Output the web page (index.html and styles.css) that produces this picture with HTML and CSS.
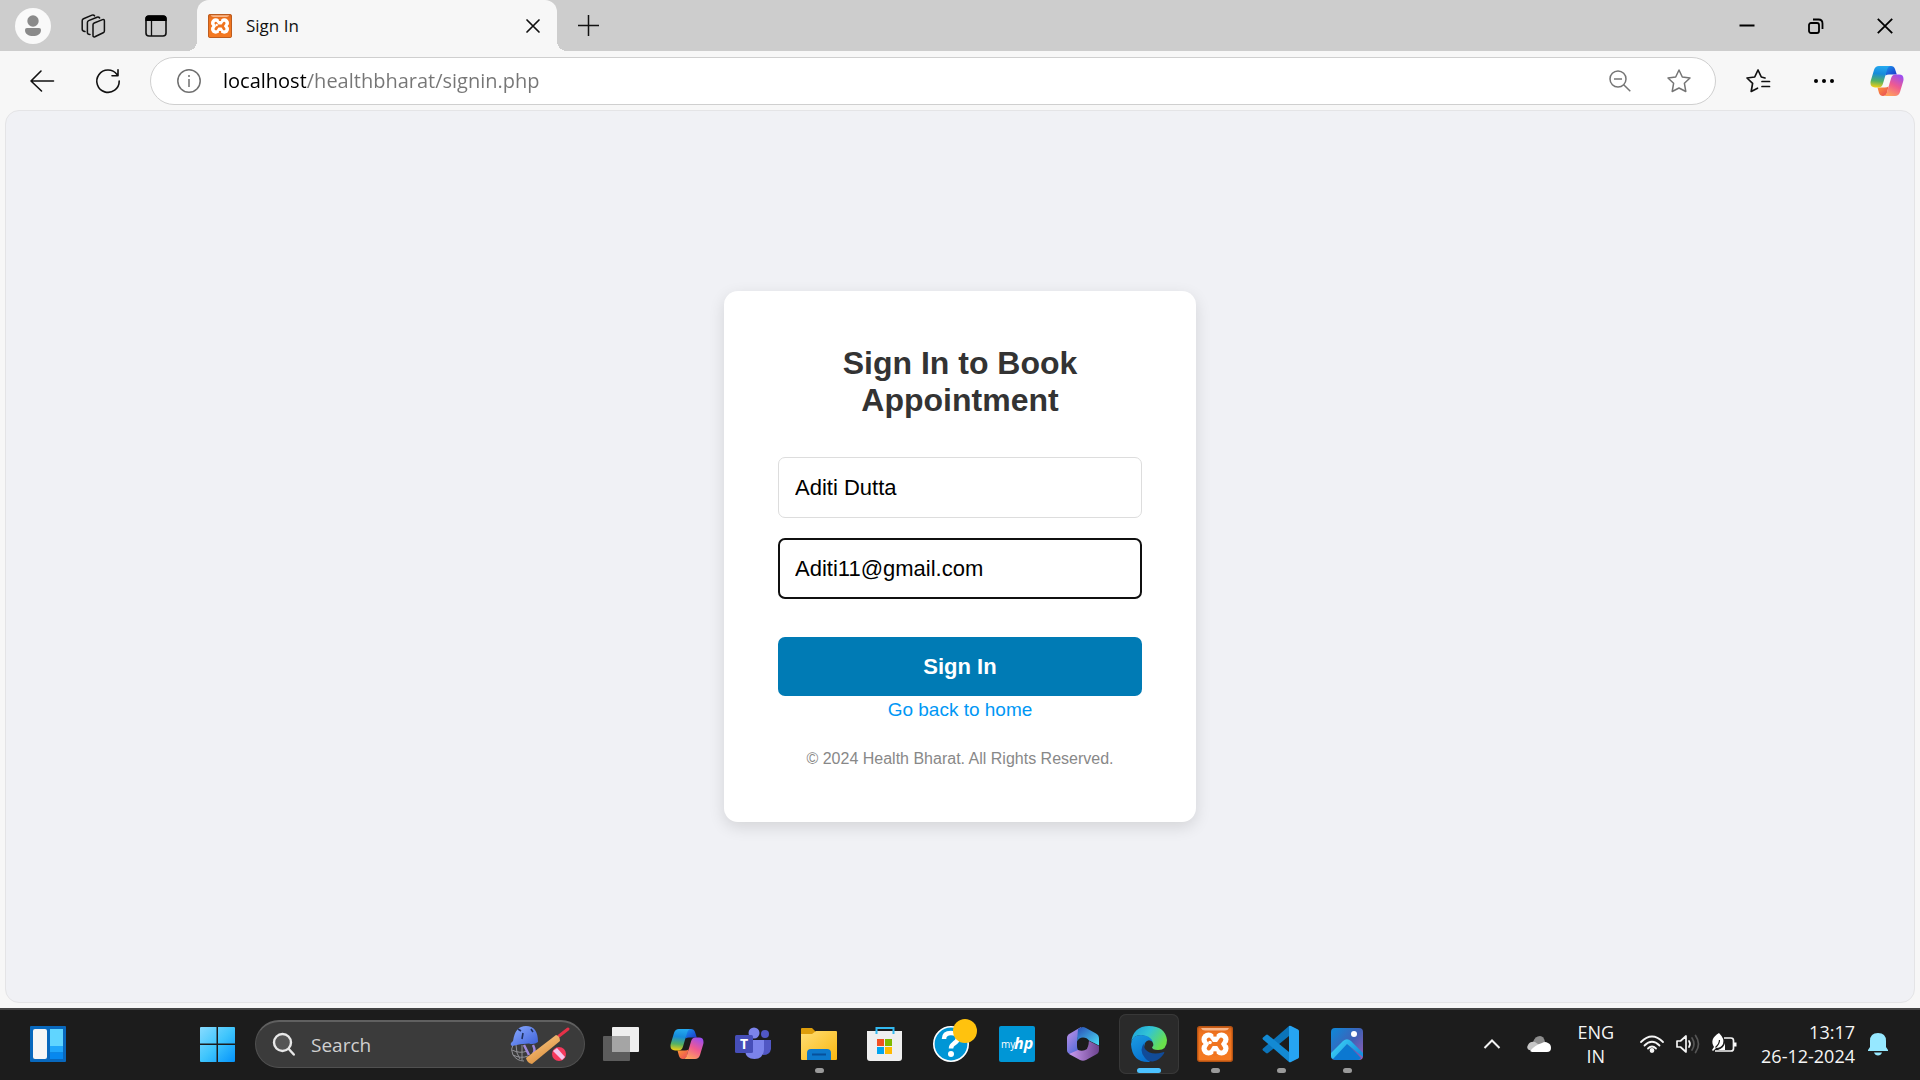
FILE: index.html
```html
<!DOCTYPE html>
<html lang="en">
<head>
<meta charset="utf-8">
<title>Sign In</title>
<link rel="stylesheet" href="styles.css">
</head>
<body>
<header class="browser">
  <div class="tabstrip">
    <div class="strip-tools">
      <button class="icon-button" aria-label="Profile"><svg width="36" height="36" viewBox="0 0 36 36"><circle cx="18" cy="18" r="18" fill="#f9f9f9"/><circle cx="18" cy="13" r="5.7" fill="#8a8a8a"/><path d="M12 20h12a2 2 0 0 1 2 2c0 4-3.500 6-8 6s-8-2-8-6a2 2 0 0 1 2-2z" fill="#8a8a8a"/></svg></button>
      <button class="icon-button workspaces" aria-label="Workspaces"><svg width="24" height="24" viewBox="0 0 24 24" fill="none" stroke="#111" stroke-width="1.500" stroke-linejoin="round" stroke-linecap="round"><path d="M12 10.800q0-1.300 1.200-1.800l8.300-3.400q1.900-.7 1.900 1.300v10q0 1.300-1.200 1.800l-8.300 4q-1.900.7-1.900-1.300z"/><path d="M9 20.500q-2.600 0-2.600-2V8.600q0-1.400 1.300-2L16 3.200q1.800-.5 2.600.8"/><path d="M4 17.600q-2.800-.3-2.800-2.300V6.700q0-1.400 1.300-2L11 1.100q1.800-.5 2.600.8"/></svg></button>
      <button class="icon-button" aria-label="Tab actions"><svg width="22" height="22" viewBox="0 0 22 22"><rect x="1" y="1" width="20" height="20" rx="3" fill="none" stroke="#111" stroke-width="1.600"/><path d="M.4 6V3.500q0-3.100 3.100-3.100h15q3.100 0 3.100 3.100V6z"/><path d="M6.500 6v15" stroke="#111" stroke-width="1.300"/></svg></button>
    </div>
    <div class="tab">
      <svg width="24" height="24" viewBox="0 0 36 36"><defs>
        <linearGradient id="xampp-bg" x2="0" y2="1"><stop offset="0" stop-color="#d9651c"/><stop offset=".2" stop-color="#f0741f"/><stop offset="1" stop-color="#f57a22"/></linearGradient>
        <symbol id="xampp" viewBox="0 0 36 36"><rect x=".7" y=".7" width="34.600" height="34.600" rx="2" fill="url(#xampp-bg)" stroke="#b65313" stroke-width="1.400"/><path d="M4 2h28q-1 2.500-4 2.500H8Q5 4.500 4 2z" fill="#f9b78a"/><g fill="#fff"><circle cx="11.500" cy="13.500" r="7"/><circle cx="11.500" cy="22.500" r="7"/><circle cx="24.500" cy="13.500" r="7"/><circle cx="24.500" cy="22.500" r="7"/><path d="M12 12h12v12H12z"/></g><g stroke="#f0741f" stroke-linecap="round" stroke-width="4.200"><path d="M11.800 13.800 14 17v2l-2.200 3.400M24.200 13.800 22 17v2l2.200 3.400M14 18h8" fill="none"/></g><path d="M3.800 16.300 6.800 18l-3 1.700zM32.200 16.300 29.200 18l3 1.700zM16.700 6h2.600l.4 4.500h-3.400zM16.700 30h2.600l.4-4.500h-3.400z" fill="#f0741f"/><circle cx="13" cy="16.500" r="1.800" fill="#fff"/></symbol>
      </defs><use href="#xampp"/></svg>
      <span class="tab-title">Sign In</span>
      <button class="icon-button" aria-label="Close tab"><svg width="14" height="14" viewBox="0 0 14 14" stroke="#111" stroke-width="1.700" stroke-linecap="round"><path d="m1 1 12 12M13 1 1 13"/></svg></button>
    </div>
    <button class="icon-button new-tab" aria-label="New tab"><svg width="21" height="21" viewBox="0 0 21 21" stroke="#111" stroke-width="1.500"><path d="M10.500 0v21M0 10.500h21"/></svg></button>
    <div class="window-controls">
      <button class="icon-button" aria-label="Minimise"><svg width="16" height="16" viewBox="0 0 16 16"><path d="M.5 7.500h15" stroke="#000" stroke-width="2"/></svg></button>
      <button class="icon-button" aria-label="Restore"><svg width="16" height="16" viewBox="0 0 16 16" fill="none" stroke="#000" stroke-width="1.800"><rect x="1" y="5" width="10" height="10" rx="2"/><path d="M5 1.500h5.500q4 0 4 4V11"/></svg></button>
      <button class="icon-button" aria-label="Close window"><svg width="16" height="16" viewBox="0 0 16 16" stroke="#000" stroke-width="1.800"><path d="m.8.8 14.400 14.400M15.200.8.800 15.200"/></svg></button>
    </div>
  </div>
  <div class="toolbar">
    <button class="icon-button" aria-label="Back"><svg width="24" height="24" viewBox="0 0 24 24" fill="none" stroke="#111" stroke-width="1.600" stroke-linecap="round" stroke-linejoin="round"><path d="M23.500 12H1M11 2 1 12l10.500 10"/></svg></button>
    <button class="icon-button reload" aria-label="Reload"><svg width="24" height="24" viewBox="0 0 24 24" fill="none" stroke="#111" stroke-width="1.600" stroke-linecap="round" stroke-linejoin="round"><path d="M23.200 12A11.200 11.200 0 1 1 21 5.500M22 .8v6h-6"/></svg></button>
    <div class="address">
      <svg width="24" height="24" viewBox="0 0 24 24" fill="none" stroke="#707070" stroke-width="1.500"><circle cx="12" cy="12" r="11.200"/><path d="M12 10v8M12 6v2"/></svg>
      <input class="url" type="text" aria-label="Address" value="localhost/healthbharat/signin.php">
      <button class="icon-button" aria-label="Zoom"><svg width="22" height="22" viewBox="0 0 22 22" fill="none" stroke="#757575" stroke-width="1.500"><circle cx="9" cy="9" r="8"/><path d="M5 9h8M14.700 14.700l6.600 6.600"/></svg></button>
      <button class="icon-button" aria-label="Add to favourites"><svg width="24" height="24" viewBox="0 0 24 24" fill="none" stroke="#757575" stroke-width="1.500" stroke-linejoin="round"><path d="m12 1 3.300 7 7.700 1-5.600 5.300 1.400 8.200-6.800-3.500-6.800 3.500 1.400-8.200L1 9l7.700-1z"/></svg></button>
    </div>
    <div class="toolbar-end">
      <button class="icon-button" aria-label="Favourites"><svg width="24" height="24" viewBox="0 0 24 24" fill="none" stroke="#111" stroke-width="1.700" stroke-linejoin="round" stroke-linecap="round"><path d="M19 9 15.300 8 12 1 8.700 8 1 9l5.600 5.300-1.400 8.200 6.300-3.300M16 12.500h7.500M16 17.500h7.500"/></svg></button>
      <button class="icon-button" aria-label="Settings and more"><svg width="28" height="20" viewBox="0 0 28 20"><circle cx="6" cy="10" r="2"/><circle cx="14" cy="10" r="2"/><circle cx="22" cy="10" r="2"/></svg></button>
      <button class="icon-button" aria-label="Copilot"><svg width="34" height="32" viewBox="0 0 34 32"><defs>
        <linearGradient id="cp-a" x1=".4" x2=".3" y2="1"><stop offset="0" stop-color="#25a9ef"/><stop offset=".35" stop-color="#168bdb"/><stop offset=".7" stop-color="#55b163"/><stop offset="1" stop-color="#f5cf13"/></linearGradient>
        <linearGradient id="cp-b" x1=".8" x2=".3" y2="1"><stop offset="0" stop-color="#9a4df3"/><stop offset=".5" stop-color="#ef5a91"/><stop offset="1" stop-color="#ffa35c"/></linearGradient>
        <linearGradient id="cp-c" x2="1" y2="1"><stop offset="0" stop-color="#1c9cf0"/><stop offset="1" stop-color="#1a34c9"/></linearGradient>
        <linearGradient id="cp-d" x2="1" y2="1"><stop offset="0" stop-color="#ff9a35"/><stop offset="1" stop-color="#e8455a"/></linearGradient>
        <symbol id="copilot" viewBox="0 0 34 32"><path d="M14 1h7q3 0 4 3l1.800 5.500H19q-2 0-3.500 1z" fill="url(#cp-c)"/><path d="M7.500 22.500H15q2 0 3.500-1L17 28q-1 3-4 3t-4-3z" fill="url(#cp-d)"/><path d="M9 1h12q-3 0-4 4l-4 13.500q-1 4-4.500 4H5Q-.5 22.500.7 16L4 5q1.200-4 5-4z" fill="url(#cp-a)"/><path d="M25 31H13q3 0 4-4l4-13.500q1-4 4.500-4H29q5.500 0 4.300 6.500L30 27q-1.200 4-5 4z" fill="url(#cp-b)"/></symbol>
      </defs><use href="#copilot"/></svg></button>
    </div>
  </div>
</header>

<main class="page">
  <section class="card">
    <h1>Sign In to Book Appointment</h1>
    <form>
      <input class="field" type="text" aria-label="Name" value="Aditi Dutta">
      <input class="field field-active" type="email" aria-label="Email" value="Aditi11@gmail.com">
      <button class="submit" type="button">Sign In</button>
    </form>
    <a class="home-link" href="#">Go back to home</a>
    <p class="copyright">© 2024 Health Bharat. All Rights Reserved.</p>
  </section>
</main>

<footer class="taskbar">
  <button class="icon-button widgets" aria-label="Widgets"><svg width="36" height="36" viewBox="0 0 36 36"><rect y="0" width="36" height="36" rx="1" fill="#0868bd"/><rect x="3" y="3" width="14" height="30" rx="2" fill="#f6f6f6"/><path d="M20 3h13v17H20z" fill="#60d5ff"/><path d="M20 20h13v6.500H20z" fill="#20a7fb"/><path d="M20 26.500h13V33H20z" fill="#0788ee"/></svg></button>
  <button class="icon-button" aria-label="Start"><svg width="35" height="35" viewBox="0 0 35 35"><defs><linearGradient id="win" gradientUnits="userSpaceOnUse" x1="0" y1="0" x2="35" y2="35"><stop offset="0" stop-color="#88dbff"/><stop offset=".5" stop-color="#3fc5fc"/><stop offset="1" stop-color="#0493fb"/></linearGradient></defs><path d="M0 1q0-1 1-1h15.500v16.500H0zM18 0h16q1 0 1 1v15.500H18zM0 18h16.500v17H1q-1 0-1-1zM18 18h17v16q0 1-1 1H18z" fill="url(#win)"/></svg></button>
  <div class="search">
    <svg width="24" height="24" viewBox="0 0 24 24" fill="none" stroke="#e8e8e8" stroke-width="2.400" stroke-linecap="round"><circle cx="9.500" cy="9.500" r="8.500" fill="#555"/><path d="m15.800 16 5 5.500"/></svg>
    <input type="text" aria-label="Search" placeholder="Search">
    <svg width="60" height="40" viewBox="0 0 60 40"><defs><linearGradient id="bat" x2=".6" y2="1"><stop offset="0" stop-color="#ffd08c"/><stop offset="1" stop-color="#d98d3c"/></linearGradient><linearGradient id="helm" x2="1" y2="1"><stop offset="0" stop-color="#8cacff"/><stop offset="1" stop-color="#3c5fd8"/></linearGradient></defs><g fill="none" stroke="#929297" stroke-width="1"><path d="M3 20q-3 4 0 10 4 6 11 6M2 25q8 4 15 1M3 30q8 4 15 1M6 20q0 9 4 14M12 20v15"/></g><path d="M14 20l5 10M23 20q3 6 0 9" stroke="#9e88dc" stroke-width="2.500" fill="none"/><path d="M3 16Q5 1 16 1q12 0 12 16-4 3-9 1.500-9 0-17 2.500-3-2 1-5z" fill="url(#helm)"/><path d="M13 8l-1 6M8 4l3 2M21 4l2 3" stroke="#20315f" stroke-width="1.600"/><path d="m49 11 9-7" stroke="#e53148" stroke-width="3" stroke-linecap="round"/><path d="m46 10q4 1 4 6L22 39q-5-1-6-6z" fill="url(#bat)"/><circle cx="49" cy="29" r="7" fill="#f4385c"/><path d="m43 26 4-3 8 9-3 3z" fill="#f3c5ec"/></svg>
  </div>
  <nav class="apps" aria-label="Apps">
    <button class="app" aria-label="Task view"><svg width="36" height="36" viewBox="0 0 36 36"><rect x="9" y="1" width="27" height="25" rx="1" fill="#efefef"/><rect y="10" width="27" height="25" rx="1" fill="#5c5c5c"/><path d="M9 10h18v16H9z" fill="#a5a5a5"/></svg></button>
    <button class="app" aria-label="Copilot"><svg width="34" height="32" viewBox="0 0 34 32"><use href="#copilot"/></svg></button>
    <button class="app" aria-label="Teams"><svg width="36" height="36" viewBox="0 0 36 36"><circle cx="30" cy="8" r="4" fill="#5157c4"/><path d="M24 14h12v9q-1 6-8 6z" fill="#5157c4"/><circle cx="19" cy="7" r="5.500" fill="#7b83eb"/><path d="M10 14h19v10q-1 9-9.500 9T10 25z" fill="#7b83eb"/><rect y="9" width="18" height="18" rx="1.500" fill="#464eb8"/><text class="teams-letter" x="9" y="23" text-anchor="middle">T</text></svg></button>
    <button class="app running" aria-label="File Explorer"><svg width="36" height="36" viewBox="0 0 36 36"><defs><linearGradient id="folder" x2="1" y2="1"><stop offset="0" stop-color="#ffde74"/><stop offset="1" stop-color="#f9b710"/></linearGradient></defs><path d="M0 3q0-1 1-1h10l4 4v6H0z" fill="#dd9d0b"/><path d="M0 8h11l4-3h20q1 0 1 1v27q0 1-1 1H1q-1 0-1-1z" fill="url(#folder)"/><path d="M6 34v-7q0-4 4-4h16q4 0 4 4v7z" fill="#0d79cc"/><path d="M11 28.500h14" stroke="#07509a" stroke-width="2"/></svg></button>
    <button class="app" aria-label="Microsoft Store"><svg width="36" height="36" viewBox="0 0 36 36"><path d="M9.500 8V2h17v6" fill="none" stroke="#32b9f0" stroke-width="2"/><path d="M0 5h35v27q0 3-3 3H3q-3 0-3-3z" fill="#efefef"/><path d="M10 13h7v7h-7z" fill="#f25022"/><path d="M18 13h7v7h-7z" fill="#7fba00"/><path d="M10 21h7v7h-7z" fill="#00a4ef"/><path d="M18 21h7v7h-7z" fill="#ffb900"/><path d="M9.500 8V5M26.500 8V5" stroke="#32b9f0" stroke-width="2"/></svg></button>
    <button class="app" aria-label="Help and support"><svg width="36" height="36" viewBox="0 0 36 36"><circle cx="18" cy="18" r="17.200" fill="#0096d6" stroke="#fff" stroke-width="1.600"/><path d="M11 13q0-6 7-6t7 5q0 3-4 5.500-3 2-3 5" fill="none" stroke="#fff" stroke-width="4.500"/><circle cx="18" cy="28" r="3" fill="#fff"/></svg><span class="badge"></span></button>
    <button class="app" aria-label="myHP"><svg width="36" height="36" viewBox="0 0 36 36"><rect width="36" height="36" rx="2" fill="#0096d6"/><text class="hp-my" x="2" y="22">my</text><text class="hp-hp" x="15" y="23">hp</text></svg></button>
    <button class="app" aria-label="Microsoft 365"><svg width="32" height="34" viewBox="0 0 32 34"><defs><linearGradient id="m-a" x2=".6" y2="1"><stop offset="0" stop-color="#c793e8"/><stop offset="1" stop-color="#526bd8"/></linearGradient><linearGradient id="m-b" x2="1" y2="1"><stop offset="0" stop-color="#284bb5"/><stop offset="1" stop-color="#4ce0f7"/></linearGradient><linearGradient id="m-c" x2="1"><stop offset="0" stop-color="#ca9bf0"/><stop offset="1" stop-color="#6c438e"/></linearGradient></defs><path d="M14 0 3 6.500Q0 8 0 11v12q0 3 3 4l4 1 6-3q-3-2-3-6v-6z" fill="url(#m-a)"/><path d="M11 2l3-1.500q2-1 5 .5l10 5.500q3 1.700 3 5v7l-10-5q-2-3-6-3t-6 4z" fill="url(#m-b)"/><path d="M2 27l9-4q5 2 9-1l2-8 10 5v4q0 3-3 4.500L19 33q-3 1.500-6 0z" fill="url(#m-c)"/><circle cx="16" cy="17" r="5.500" fill="#1c1c1c"/></svg></button>
    <button class="app running current" aria-label="Edge"><svg width="36" height="36" viewBox="0 0 36 36"><defs><linearGradient id="e-a" x2="1" y2=".5"><stop offset="0" stop-color="#199bdb"/><stop offset=".5" stop-color="#32c4d5"/><stop offset="1" stop-color="#69e04b"/></linearGradient><linearGradient id="e-b" x2=".5" y2="1"><stop offset="0" stop-color="#1b9de2"/><stop offset="1" stop-color="#0872d0"/></linearGradient></defs><path d="M0 17Q2 0 18 0q16 0 18 14 0 10-9 10-6 0-6-3 2-1 1-4-3-7-12-8Q2 9 0 17z" fill="url(#e-a)"/><path d="M0 18Q1 9 10 9q9 0 12 7-5-4-8 1-4 10 5 19Q1 37 0 18z" fill="url(#e-b)"/><path d="M14 16q-7 8 0 16 3 4 8 3.500 7-1.500 11-8 1-2-1-1.200Q20 30 14 23q-2-4 0-7z" fill="#114b98"/></svg></button>
    <button class="app running" aria-label="XAMPP"><svg width="36" height="36" viewBox="0 0 36 36"><use href="#xampp"/></svg></button>
    <button class="app running" aria-label="Visual Studio Code"><svg width="36" height="36" viewBox="0 0 36 36"><path d="M26 0v10L5 27q-1 .8-2 0l-3-2.500q-1-1 0-2z" fill="#0b74ba"/><path d="M26 36V26L5 9q-1-.8-2 0l-3 2.500q-1 1 0 2z" fill="#138ad3"/><path d="M26 0q1-.5 2 0l7 3.500q1 .5 1 1.500v26q0 1-1 1.500L28 36q-1 .5-2 0z" fill="#26a4f2"/></svg></button>
    <button class="app running" aria-label="Photos"><svg width="32" height="32" viewBox="0 0 32 32"><defs><linearGradient id="ph" y1=".2" x2="1" y2="1"><stop offset="0" stop-color="#1483d5"/><stop offset=".5" stop-color="#4160b5"/><stop offset="1" stop-color="#9b5eb5"/></linearGradient><linearGradient id="mt" x2="1" y2=".5"><stop offset="0" stop-color="#43d9f8"/><stop offset="1" stop-color="#1593e0"/></linearGradient></defs><rect width="32" height="32" rx="4" fill="url(#ph)"/><path d="m2 30 14-14 14 14q-1 2-3 2H5q-2 0-3-2z" fill="#0b78d1"/><path d="M0 25 12 13q4-3.500 8 0l12 12v4L16 16 2 31q-2-1-2-3z" fill="url(#mt)"/><circle cx="23" cy="6" r="3" fill="#fff"/></svg></button>
  </nav>
  <div class="tray">
    <button class="icon-button" aria-label="Show hidden icons"><svg width="18" height="12" viewBox="0 0 18 12" fill="none" stroke="#f2f2f2" stroke-width="2"><path d="m1.500 10 7.500-7.500 7.500 7.500"/></svg></button>
    <button class="icon-button cloud" aria-label="OneDrive"><svg width="24" height="18" viewBox="0 0 24 18"><path d="M6 7q2-6 7-6 4 0 5 6l-7 5z" fill="#8d8d8d"/><path d="M2 15q-3-2-1-5 2-4 7-3l9 6-8 3z" fill="#c6c6c6"/><path d="M3 16q5-6 12-8 3-2 6 0 3 1 3 5t-4 4H5z" fill="#fff"/></svg></button>
    <div class="stack language"><span>ENG</span><span>IN</span></div>
    <div class="status">
      <svg width="24" height="18" viewBox="0 0 24 18" fill="none" stroke="#f5f5f5" stroke-width="1.800" stroke-linecap="round"><path d="M1 7q11-11 22 0M4.500 10.500q7.500-7.500 15 0M8 13.500q4-4 8 0"/><circle cx="12" cy="15.500" r="1.500" fill="#fff"/></svg>
      <svg width="24" height="20" viewBox="0 0 24 20" fill="none" stroke="#f5f5f5" stroke-width="1.700" stroke-linecap="round" stroke-linejoin="round"><path d="M1 7h3.500L10 2v16l-5.500-5H1zM13 7q2 3 0 6"/><path d="M16 4q4 6 0 12M19.500 1.500q6 8.500 0 17" stroke="#555"/></svg>
      <svg width="25" height="22" viewBox="0 0 25 22" fill="none" stroke="#f5f5f5" stroke-width="1.700"><path d="M12 5h7q2.500 0 2.500 2.500v8q0 2.500-2.500 2.500H3"/><path d="M22 9.500h2.500v4H22z" fill="#fff" stroke="none"/><path d="M7 0q6 6 4 11-2 4-7 4l-3 3-1-1 2-3Q-3 6 7 0z" fill="#fff" stroke="none"/><path d="M7.500 7q0 4-4 7.500" stroke="#1c1c1c" stroke-width="1.200"/><path d="M6 17q6-2 7-7v7z" fill="#fff" stroke="none"/></svg>
    </div>
    <div class="stack clock"><span>13:17</span><span>26-12-2024</span></div>
    <button class="icon-button" aria-label="Notifications"><svg width="20" height="24" viewBox="0 0 20 24" fill="#96e8ff"><path d="M2 9q0-8 8-8t8 8v6l2 3v1H0v-1l2-3z"/><path d="M6 20.500h8Q13 23.500 10 23.500t-4-3z"/></svg></button>
  </div>
</footer>
</body>
</html>
```

FILE: styles.css
```css
* {
  box-sizing: border-box;
}

body {
  margin: 0;
  min-height: 100vh;
  display: flex;
  flex-direction: column;
  background: #f7f7f7;
  font-family: "Open Sans", "Noto Sans", sans-serif;
}

button,
input {
  margin: 0;
  border: 0;
  padding: 0;
  background: none;
  font-family: inherit;
}

svg {
  display: block;
  flex: none;
  overflow: visible;
}

.icon-button {
  display: flex;
  align-items: center;
  justify-content: center;
  flex: none;
}

/* Tab strip */
.tabstrip {
  display: flex;
  align-items: center;
  height: 51px;
  background: #cdcdcd;
}

.strip-tools {
  display: flex;
  align-items: center;
  gap: 30px;
  width: 197px;
  padding-left: 15px;
}

.workspaces {
  margin-right: 10px;
}

.tab {
  position: relative;
  display: flex;
  align-items: center;
  width: 360px;
  height: 100%;
  padding: 0 17px 0 11px;
  border-radius: 12px 12px 0 0;
  background: #f7f7f7;
}

.tab::before,
.tab::after {
  content: "";
  position: absolute;
  bottom: 0;
  width: 10px;
  height: 10px;
}

.tab::before {
  right: 100%;
  background: radial-gradient(circle at 0 0, transparent 10px, #f7f7f7 10px);
}

.tab::after {
  left: 100%;
  background: radial-gradient(circle at 100% 0, transparent 10px, #f7f7f7 10px);
}

.tab-title {
  flex: 1;
  padding-left: 14px;
  font-size: 17px;
  line-height: 24px;
  color: #111;
}

.new-tab {
  margin-left: 21px;
}

.window-controls {
  display: flex;
  gap: 53px;
  margin-left: auto;
  padding-right: 27px;
}

/* Toolbar */
.toolbar {
  display: flex;
  align-items: center;
  height: 59px;
  padding: 0 16px 0 30px;
}

.reload {
  margin-left: 42px;
}

.address {
  display: flex;
  align-items: center;
  flex: 1;
  height: 48px;
  margin: 0 30px;
  padding: 0 24px 0 26px;
  border: 1px solid #cfcfcf;
  border-radius: 24px;
  background: #fff;
}

.url {
  flex: 1;
  min-width: 0;
  height: 32px;
  margin-left: 22px;
  font-size: 20px;
  color: transparent;
  background: linear-gradient(to right, #000 83px, #767676 83px);
  background-clip: text;
  -webkit-background-clip: text;
}

.address .icon-button + .icon-button {
  margin-left: 36px;
}

.toolbar-end {
  display: flex;
  align-items: center;
  gap: 32px;
}

.toolbar-end .icon-button:first-child {
  margin-right: 8px;
}

/* Page */
.page {
  flex: 1;
  display: flex;
  align-items: center;
  justify-content: center;
  margin: 0 5px 5px;
  padding: 24px;
  border: 1px solid #e4e4e6;
  border-radius: 14px;
  background: #f0f1f5;
  font-family: "Liberation Sans", Arial, sans-serif;
}

.card {
  width: 472px;
  padding: 54px;
  border-radius: 14px;
  background: #fff;
  box-shadow: 0 5px 16px rgba(0, 0, 0, 0.12);
  text-align: center;
}

.card h1 {
  margin: 0 0 38px;
  font-size: 32px;
  line-height: 37px;
  color: #333;
}

.card form {
  display: flex;
  flex-direction: column;
}

.field {
  width: 100%;
  height: 61px;
  margin-bottom: 20px;
  padding: 0 16px;
  border: 1px solid #ddd;
  border-radius: 7px;
  background: #fff;
  font-size: 22px;
  color: #000;
}

.field-active {
  padding: 0 15px;
  border: 2px solid #101010;
}

.submit {
  height: 59px;
  margin-top: 18px;
  border-radius: 7px;
  background: #007bb5;
  color: #fff;
  font-size: 22px;
  font-weight: bold;
}

.home-link {
  display: block;
  color: #0097f5;
  font-size: 19px;
  line-height: 28px;
  text-decoration: none;
}

.copyright {
  margin: 25px 0 0;
  color: #888;
  font-size: 16px;
  line-height: 19px;
}

/* Taskbar */
.taskbar {
  display: flex;
  align-items: center;
  height: 72px;
  padding: 0 32px 0 30px;
  background: #1c1c1c;
  box-shadow: inset 0 2px #444;
  color: #f5f5f5;
}

.widgets {
  margin-right: 134px;
}

.search {
  display: flex;
  align-items: center;
  width: 330px;
  height: 48px;
  margin-left: 20px;
  padding: 0 14px 0 17px;
  border: 1px solid #505050;
  border-top: 2px solid #606060;
  border-radius: 24px;
  background: #3b3b3b;
}

.search input {
  flex: 1;
  min-width: 0;
  margin-left: 14px;
  font-size: 19px;
  color: #d6d6d6;
}

.search input::placeholder {
  color: #d0d0d0;
}

.apps {
  display: flex;
  gap: 6px;
  margin-left: 6px;
}

.app {
  position: relative;
  display: flex;
  align-items: center;
  justify-content: center;
  width: 60px;
  height: 60px;
  border-radius: 7px;
}

.current {
  background: #2a2a2a;
  box-shadow: inset 0 0 0 1px #383838;
}

.running::after {
  content: "";
  position: absolute;
  bottom: 1px;
  left: 50%;
  width: 9px;
  height: 5px;
  margin-left: -4px;
  border-radius: 3px;
  background: #9a9a9a;
}

.current::after {
  width: 24px;
  margin-left: -12px;
  background: #4cc2ff;
}

.badge {
  position: absolute;
  top: 5px;
  right: 4px;
  width: 24px;
  height: 24px;
  border-radius: 50%;
  background: #ffc20e;
}

.teams-letter {
  font: bold 14px "Open Sans", sans-serif;
  fill: #fff;
}

.hp-my {
  font: 10px "Open Sans", sans-serif;
  fill: #fff;
}

.hp-hp {
  font: italic bold 16px "Open Sans", sans-serif;
  fill: #fff;
}

.tray {
  display: flex;
  align-items: center;
  margin-left: auto;
}

.cloud {
  margin-left: 26px;
}

.stack {
  display: flex;
  flex-direction: column;
  font-size: 18px;
  line-height: 24px;
}

.language {
  margin: 0 26px;
  align-items: center;
}

.status {
  display: flex;
  align-items: center;
  gap: 12px;
}

.clock {
  align-items: flex-end;
  margin: 0 13px 0 24px;
}
```
